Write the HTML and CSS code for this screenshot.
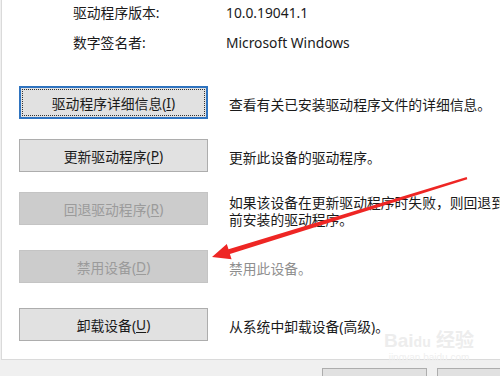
FILE: index.html
```html
<!DOCTYPE html>
<html lang="zh-CN">

<head>
    <meta charset="UTF-8">
    <meta name="viewport" content="width=device-width, initial-scale=1.0">
    <title>驱动程序</title>
    <link rel="stylesheet" href="styles.css">
</head>

<body>
    <div class="panel">
        <div class="info">
            <div class="info-label">驱动程序版本:</div>
            <div class="info-value">10.0.19041.1</div>
            <div class="info-label">数字签名者:</div>
            <div class="info-value">Microsoft Windows</div>
        </div>

        <div class="actions">
            <div class="action-row">
                <div class="btn btn-default">驱动程序详细信息(<u>I</u>)</div>
                <div class="action-desc">查看有关已安装驱动程序文件的详细信息。</div>
            </div>
            <div class="action-row">
                <div class="btn">更新驱动程序(<u>P</u>)</div>
                <div class="action-desc">更新此设备的驱动程序。</div>
            </div>
            <div class="action-row action-row-tall">
                <div class="btn btn-disabled">回退驱动程序(<u>R</u>)</div>
                <div class="action-desc">如果该设备在更新驱动程序时失败，则回退到以<br>前安装的驱动程序。</div>
            </div>
            <div class="action-row action-row-tall">
                <div class="btn btn-disabled">禁用设备(<u>D</u>)</div>
                <div class="action-desc action-desc-disabled">禁用此设备。</div>
            </div>
            <div class="action-row">
                <div class="btn">卸载设备(<u>U</u>)</div>
                <div class="action-desc">从系统中卸载设备(高级)。</div>
            </div>
        </div>
    </div>

    <div class="footer">
        <div class="btn footer-btn"></div>
        <div class="btn footer-btn"></div>
    </div>

    <div class="watermark">
        <div class="watermark-logo">Bai<span class="paw">du</span> 经验</div>
        <div class="watermark-url">jingyan.baidu.com</div>
    </div>

    <svg class="arrow" width="500" height="376" viewBox="0 0 500 376">
        <polygon fill="#ee2624"
            points="212,257 226.8,244.1 228.5,249.3 466.7,177 467.3,179.2 229.9,254.1 231.6,259.3" />
    </svg>
</body>

</html>
```

FILE: styles.css
```css
body {
    margin: 0;
    width: 500px;
    height: 376px;
    overflow: hidden;
    position: relative;
    font-family: "Noto Sans", "Noto Sans CJK SC", sans-serif;
    font-size: 13.8px;
    color: #1a1a1a;
    background: #f0f0f0;
}

.panel {
    height: 360px;
    margin-left: 1px;
    box-sizing: border-box;
    background: #fff;
    border-left: 1px solid #dadada;
    border-bottom: 1px solid #dadada;
}

.info {
    display: grid;
    grid-template-columns: 153px auto;
    row-gap: 10px;
    padding: 3px 0 0 71px;
    line-height: 20px;
}

.actions {
    display: flex;
    flex-direction: column;
    gap: 20px;
    padding: 33px 0 0 17px;
}

.action-row {
    display: flex;
    align-items: center;
    height: 33px;
}

.action-row-tall {
    margin-bottom: 5px;
}

.btn {
    box-sizing: border-box;
    width: 189px;
    height: 33px;
    flex-shrink: 0;
    display: flex;
    align-items: center;
    justify-content: center;
    background: #e1e1e1;
    border: 1px solid #adadad;
    color: #1a1a1a;
    white-space: nowrap;
}

.btn u {
    text-underline-offset: 2px;
}

.btn-default {
    border: 2px solid #2f74c0;
    outline: 1px dotted #333;
    outline-offset: -4px;
}

.btn-disabled {
    background: #cccccc;
    border-color: #c4c4c4;
    color: #9b9b9b;
}

.action-desc {
    margin-left: 21px;
    padding-top: 4px;
    line-height: 17px;
    white-space: nowrap;
}

.action-desc-disabled {
    color: #8f8f8f;
}

.footer {
    display: flex;
    gap: 10px;
    padding: 8px 0 0 322px;
}

.footer-btn {
    width: 105px;
    height: 24px;
}

.watermark {
    position: absolute;
    left: 384px;
    top: 330px;
    color: #ededed;
    text-align: center;
}

.watermark-logo {
    font-family: "Liberation Sans", "Noto Sans CJK SC", sans-serif;
    font-size: 19px;
    font-weight: bold;
    line-height: 22px;
}

.paw {
    font-size: 14px;
}

.watermark-url {
    font-family: "Liberation Sans", sans-serif;
    font-size: 10px;
    line-height: 10px;
    color: #efefef;
}

.arrow {
    position: absolute;
    left: 0;
    top: 0;
}
```
